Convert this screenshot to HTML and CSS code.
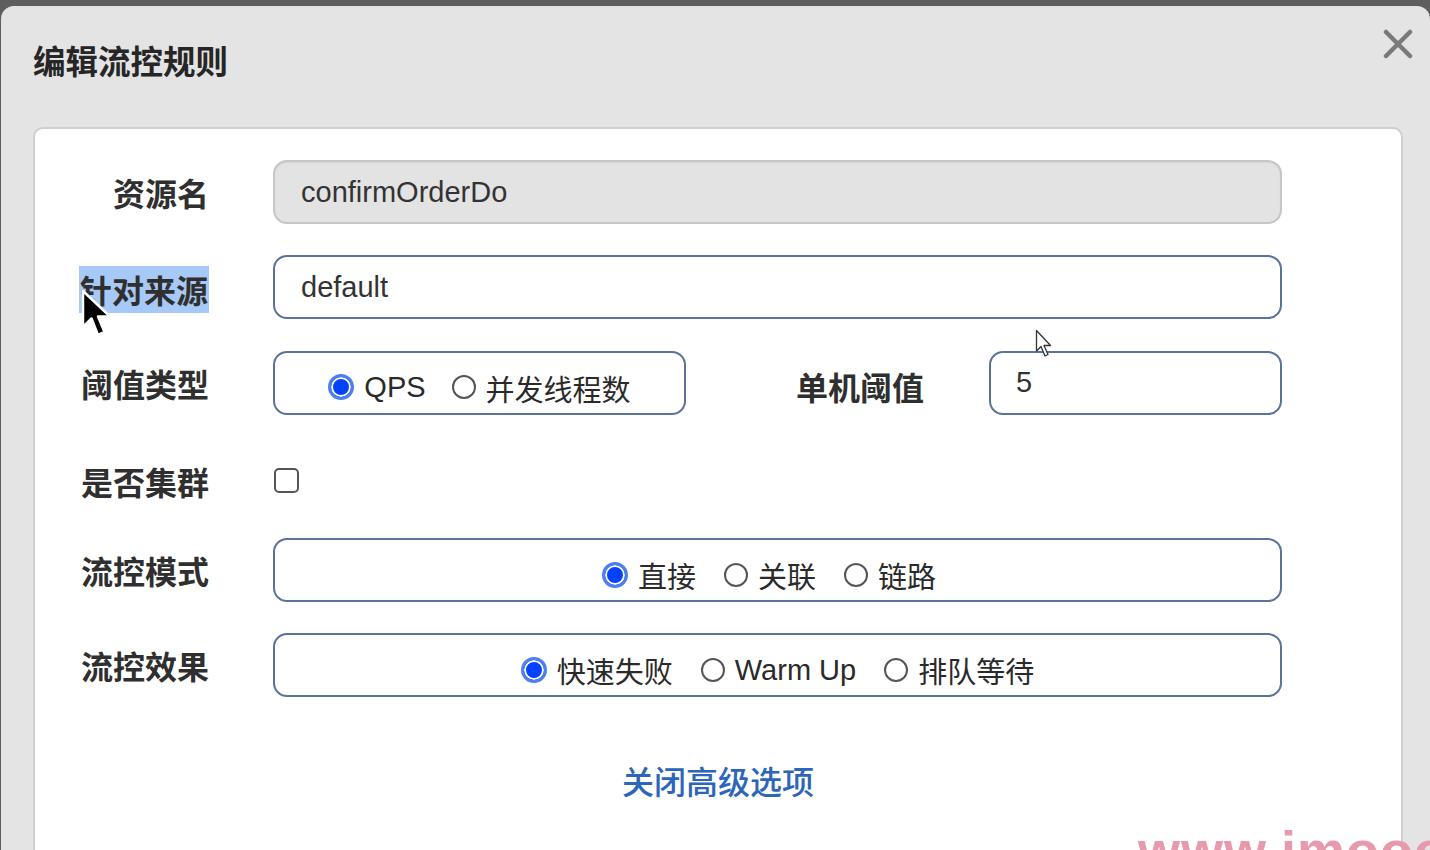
FILE: index.html
```html
<!DOCTYPE html>
<html lang="zh-CN">
<head>
<meta charset="utf-8">
<title>编辑流控规则</title>
<link rel="stylesheet" href="styles.css">
</head>
<body>
<div class="dialog">
  <div class="dialog-head">
    <h2 class="title">编辑流控规则</h2>
    <button class="close" aria-label="close">
      <svg width="30" height="30" viewBox="0 0 30 30"><path d="M3 3 L27 27 M27 3 L3 27" stroke="#7a7a7a" stroke-width="4.5" stroke-linecap="round"/></svg>
    </button>
  </div>
  <div class="panel">
    <div class="form">
      <div class="label">资源名</div>
      <div class="input disabled">confirmOrderDo</div>

      <div class="label"><span class="selected-text">针对来源</span></div>
      <div class="input">default</div>

      <div class="label">阈值类型</div>
      <div class="split">
        <div class="input radios narrow">
          <span class="opt"><span class="radio on"></span>QPS</span>
          <span class="opt"><span class="radio"></span>并发线程数</span>
        </div>
        <div class="label sub">单机阈值</div>
        <div class="input small">5</div>
      </div>

      <div class="label check-row">是否集群</div>
      <div class="check-row"><span class="checkbox"></span></div>

      <div class="label">流控模式</div>
      <div class="input radios shift">
        <span class="opt"><span class="radio on"></span>直接</span>
        <span class="opt"><span class="radio"></span>关联</span>
        <span class="opt"><span class="radio"></span>链路</span>
      </div>

      <div class="label">流控效果</div>
      <div class="input radios">
        <span class="opt"><span class="radio on"></span>快速失败</span>
        <span class="opt"><span class="radio"></span>Warm Up</span>
        <span class="opt"><span class="radio"></span>排队等待</span>
      </div>
    </div>
    <div class="more"><a class="more-link">关闭高级选项</a></div>
  </div>
</div>

<svg class="cursor cursor-main" width="32" height="50" viewBox="0 0 32 50">
  <path d="M2 2 L2 38 L10.5 29.5 L17 46 L23.5 43 L17 27.5 L29 27.5 Z" fill="#000" stroke="#fff" stroke-width="2.5" stroke-linejoin="round"/>
</svg>
<svg class="cursor cursor-ghost" width="20" height="30" viewBox="0 0 20 30">
  <path d="M1.5 1.5 L1.5 22 L6 17.5 L10 27 L13 25.5 L9 16.5 L15.5 16.5 Z" fill="#fff" stroke="#333" stroke-width="1.3" stroke-linejoin="round"/>
</svg>
<div class="watermark">www.imooc</div>
</body>
</html>
```

FILE: styles.css
```css
* { box-sizing: border-box; }

html, body {
  margin: 0;
  padding: 0;
  height: 850px;
  overflow: hidden;
}

body {
  background: #5e5e5e;
  font-family: "Liberation Sans", "Noto Sans CJK SC", sans-serif;
  color: #333;
  padding: 6px 0 0 1px;
}

.dialog {
  background: #e4e4e4;
  border-radius: 13px 13px 0 0;
  height: 900px;
  padding: 0 27px 0 32px;
}

.dialog-head {
  display: flex;
  justify-content: space-between;
  align-items: flex-start;
  height: 121px;
  padding-top: 34px;
}

.title {
  margin: 0;
  font-family: "Noto Sans CJK SC", sans-serif;
  font-weight: 700;
  font-size: 32.5px;
  line-height: 40px;
  color: #262626;
}

.close {
  background: none;
  border: 0;
  padding: 0;
  margin: -11px -10px 0 0;
  width: 30px;
  height: 30px;
}

.panel {
  background: #fff;
  border: 2px solid #cfcfcf;
  border-radius: 10px;
  padding: 31px 0 120px 46px;
}

.form {
  display: grid;
  grid-template-columns: 128px 1009px;
  grid-template-rows: 64px 64px 64px 61px 64px 64px;
  column-gap: 64px;
  row-gap: 31.25px;
}

.label {
  font-family: "Noto Sans CJK SC", sans-serif;
  font-weight: 700;
  font-size: 32px;
  color: #2f2f2f;
  text-align: right;
  display: flex;
  align-items: center;
  justify-content: flex-end;
  white-space: nowrap;
}

.selected-text {
  background: #a6c9f7;
  line-height: 47px;
  padding: 0 1px;
  margin-top: 4px;
}

.input {
  height: 64px;
  border: 2px solid #5a729c;
  border-radius: 14px;
  background: #fff;
  font-size: 29px;
  padding-left: 26px;
  display: flex;
  align-items: center;
  color: #333;
}

.input.disabled {
  background: #e3e3e3;
  border-color: #c6c6c6;
  box-shadow: inset 0 1px 2px rgba(0,0,0,0.06);
}

.split {
  display: flex;
  align-items: center;
}

.input.narrow {
  width: 413px;
  flex: none;
  gap: 26px;
}

.label.sub {
  flex: 1;
  margin-right: 65px;
  height: 64px;
  padding-top: 6px;
}

.input.small {
  width: 293px;
  flex: none;
  padding-left: 25px;
}

.radios {
  justify-content: center;
  padding-left: 0;
  gap: 28px;
  font-family: "Liberation Sans", "Noto Sans CJK SC", sans-serif;
}

.radios.shift {
  padding-right: 17px;
}

.opt {
  display: inline-flex;
  align-items: center;
  gap: 10px;
  font-size: 29px;
  color: #2a2a2a;
  padding-top: 10px;
}

.radio {
  width: 24px;
  height: 24px;
  border-radius: 50%;
  border: 2px solid #555;
  background: #fff;
  flex: none;
  margin-top: -1px;
}

.radio.on {
  width: 26px;
  height: 26px;
  border: 3px solid #4d7ff0;
  background: #0542ff;
  box-shadow: inset 0 0 0 2px #fff;
}

.check-row {
  display: flex;
  align-items: center;
  padding-top: 9px;
}

.checkbox {
  width: 25px;
  height: 25px;
  border: 2px solid #555;
  border-radius: 5px;
  background: #fff;
  margin-left: 1px;
}

.more {
  text-align: center;
  margin-top: 63px;
  padding-right: 46px;
}

.more-link {
  font-family: "Noto Sans CJK SC", sans-serif;
  font-size: 32px;
  line-height: 40px;
  font-weight: 500;
  color: #2c66b8;
}

.cursor {
  position: absolute;
}

.cursor-main {
  left: 81px;
  top: 289px;
}

.cursor-ghost {
  left: 1035px;
  top: 329px;
}

.watermark {
  position: absolute;
  left: 1138px;
  top: 818px;
  font-family: "Liberation Sans", sans-serif;
  font-weight: 700;
  font-size: 54px;
  line-height: 64px;
  color: #e79aac;
  white-space: nowrap;
  letter-spacing: 1px;
}
```
